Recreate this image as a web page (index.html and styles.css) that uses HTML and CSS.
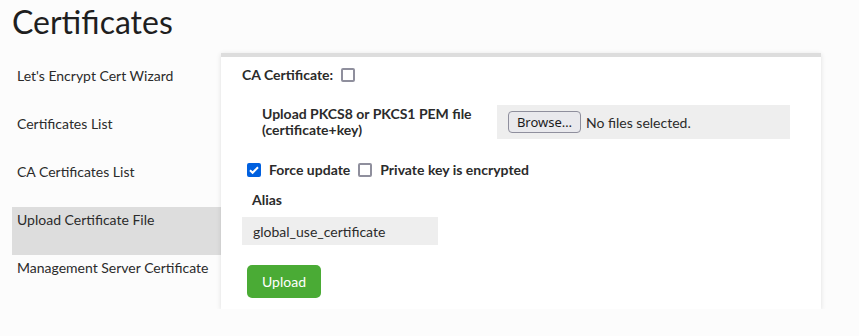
FILE: index.html
```html
<!DOCTYPE html>
<html lang="en">
<head>
    <meta charset="UTF-8">
    <title>Certificates</title>
    <link rel="stylesheet" href="styles.css">
</head>
<body>
    <div class="page">
        <h1 class="page-title">Certificates</h1>
        <div class="layout">
            <ul class="side-menu">
                <li class="menu-item">Let's Encrypt Cert Wizard</li>
                <li class="menu-item">Certificates List</li>
                <li class="menu-item">CA Certificates List</li>
                <li class="menu-item active">Upload Certificate File</li>
                <li class="menu-item">Management Server Certificate</li>
            </ul>

            <div class="panel">
                <div class="ca-row">
                    <span class="label">CA Certificate:</span>
                    <input type="checkbox" class="check">
                </div>

                <div class="file-row">
                    <div class="file-label">Upload PKCS8 or PKCS1 PEM file<br>(certificate+key)</div>
                    <div class="file-box">
                        <button class="browse-btn" type="button">Browse…</button>
                        <span class="file-status">No files selected.</span>
                    </div>
                </div>

                <div class="options-row">
                    <label class="option"><input type="checkbox" class="check" checked> Force update</label>
                    <label class="option"><input type="checkbox" class="check"> Private key is encrypted</label>
                </div>

                <div class="alias-label">Alias</div>
                <input class="alias-input" type="text" value="global_use_certificate">

                <button class="upload-btn" type="button">Upload</button>
            </div>
        </div>
    </div>
</body>
</html>
```

FILE: styles.css
```css
:root {
    --text-primary: #2b2b2b;
    --menu-active: #dddddd;
    --field-bg: #eeeeee;
    --check-blue: #0060df;
    --check-border: #8f8f9d;
    --green: #4aab35;
}

* {
    margin: 0;
    padding: 0;
    box-sizing: border-box;
}

body {
    font-family: 'Lato', 'Liberation Sans', sans-serif;
    background-color: #fcfcfc;
    color: var(--text-primary);
    font-size: 14px;
}

.page {
    padding: 0 12px;
}

.page-title {
    font-size: 32px;
    font-weight: 400;
    line-height: 44px;
    color: #1f1f1f;
}

.layout {
    display: flex;
    align-items: flex-start;
    margin-top: 9px;
}

/* left menu */
.side-menu {
    list-style: none;
    width: 209px;
    margin-top: 10px;
}

.menu-item {
    height: 48px;
    padding: 3px 5px 0;
    line-height: 20px;
    font-size: 14px;
}

.menu-item.active {
    background-color: var(--menu-active);
}

/* form panel */
.panel {
    width: 600px;
    background: #ffffff;
    border-top: 4px solid #dddddd;
    box-shadow: 0 1px 5px rgba(0, 0, 0, 0.12);
    padding: 10px 20px 11px 21px;
    display: flex;
    flex-direction: column;
    align-items: flex-start;
}

.label,
.file-label,
.option,
.alias-label {
    font-weight: 700;
    font-size: 14px;
    line-height: 16px;
}

.check {
    appearance: none;
    width: 14px;
    height: 14px;
    border: 2px solid var(--check-border);
    border-radius: 2px;
    background: #fff;
    flex-shrink: 0;
}

.check:checked {
    border-color: var(--check-blue);
    background: var(--check-blue) url("data:image/svg+xml,%3Csvg xmlns='http://www.w3.org/2000/svg' viewBox='0 0 14 14'%3E%3Cpath d='M3 7.2l2.6 2.6L11 4.2' fill='none' stroke='white' stroke-width='2'/%3E%3C/svg%3E") center / 14px no-repeat;
}

.ca-row {
    display: flex;
    align-items: center;
    gap: 8px;
}

.file-row {
    display: flex;
    align-items: center;
    margin-top: 22px;
}

.file-label {
    width: 255px;
    padding-left: 20px;
}

.file-box {
    width: 293px;
    height: 34px;
    background: var(--field-bg);
    display: flex;
    align-items: center;
    gap: 5px;
    padding-left: 11px;
}

.browse-btn {
    font-family: 'Noto Sans', 'DejaVu Sans', sans-serif;
    font-size: 13px;
    color: #1b1b1b;
    height: 22px;
    width: 73px;
    border: 1px solid var(--check-border);
    border-radius: 4px;
    background: #e9e9ed;
}

.file-status {
    font-size: 14px;
}

.options-row {
    display: flex;
    gap: 8px;
    margin-top: 23px;
    margin-left: 5px;
}

.option {
    display: flex;
    align-items: center;
    gap: 8px;
}

.alias-label {
    margin-top: 14px;
    padding-left: 10px;
}

.alias-input {
    font-family: inherit;
    font-size: 14px;
    color: var(--text-primary);
    width: 196px;
    height: 28px;
    margin-top: 9px;
    border: none;
    background: var(--field-bg);
    padding: 0 11px;
}

.upload-btn {
    font-family: inherit;
    font-size: 14px;
    color: #ffffff;
    background: var(--green);
    border: none;
    border-radius: 5px;
    width: 74px;
    height: 33px;
    margin-top: 20px;
    margin-left: 5px;
}
```
